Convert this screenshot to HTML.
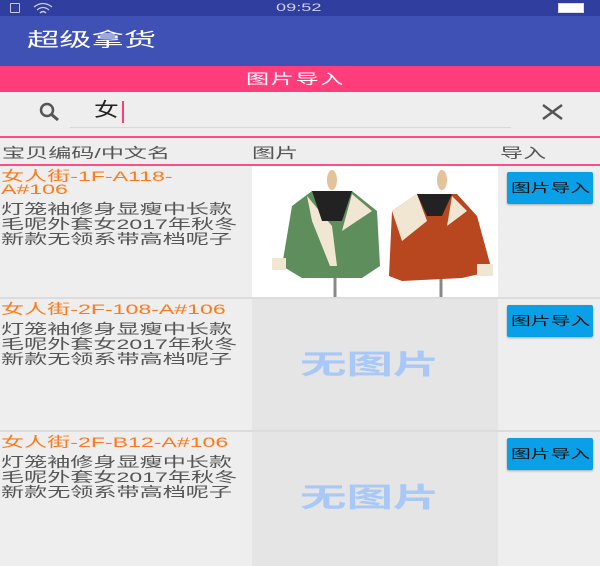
<!DOCTYPE html>
<html><head><meta charset="utf-8"><style>
*{margin:0;padding:0;box-sizing:border-box}
body{width:600px;height:566px;overflow:hidden;background:#eeeeee;font-family:"Liberation Sans","Noto Sans CJK SC",sans-serif;position:relative}
.abs{position:absolute}
.s{display:inline-block;transform:scaleX(1.65);transform-origin:left top;white-space:nowrap}
.code{color:#ff7a1a;font-size:14px;line-height:13px}
.desc{color:#555;font-size:14px;line-height:15px;margin-top:6px}
.btn{position:absolute;left:507px;width:86px;height:32px;background:#0aa0e8;border-radius:2px;box-shadow:0 1px 2px rgba(0,0,0,.3);color:#111;font-size:12px;line-height:32px;padding-left:4px}
.noimg{position:absolute;left:252px;width:246px;background:#e5e5e5;color:#a8c8f8;font-size:27px;font-weight:bold}
.noimg span{position:absolute;left:48px;top:44px;transform:scaleX(1.72)}
.sep{position:absolute;left:0;width:600px;height:2px;background:#dcdcdc}
</style></head><body>
<div class="abs" style="left:0;top:0;width:600px;height:16px;background:#2f3e9f;color:#cfd3ee;font-size:11px;line-height:16px"><span class="s" style="position:absolute;left:276px">09:52</span></div>
<div class="abs" style="left:10px;top:3px;width:10px;height:10px;border:1px solid #ccd;border-radius:1px"></div>
<svg class="abs" style="left:32px;top:2px" width="22" height="12"><path d="M2 5Q11 -2 20 5M5 8Q11 3 17 8M8 11Q11 8 14 11" stroke="#ccd" stroke-width="1.3" fill="none"/></svg>
<div class="abs" style="left:558px;top:3px;width:26px;height:10px;border:1px solid #dde;background:#fff"></div>
<div class="abs" style="left:0;top:16px;width:600px;height:50px;background:#3f51b5;color:#fff;font-size:19px;line-height:50px"><span class="s" style="position:absolute;left:27px;transform:scaleX(1.7)">超级拿货</span></div>
<div class="abs" style="left:0;top:66px;width:600px;height:26px;background:#ff3d7b;color:#fff;font-size:14px;line-height:26px"><span class="s" style="position:absolute;left:246px;letter-spacing:1px">图片导入</span></div>
<svg class="abs" style="left:36px;top:102px" width="32" height="22"><circle cx="11" cy="8" r="6" fill="none" stroke="#555" stroke-width="2.5"/><line x1="15" y1="12" x2="22" y2="18" stroke="#555" stroke-width="3"/></svg>
<div class="abs" style="left:94px;top:98px;font-size:19px;color:#222;line-height:26px"><span class="s" style="transform:scaleX(1.3)">女</span></div>
<div class="abs" style="left:122px;top:101px;width:2px;height:22px;background:#ff3d7b"></div>
<svg class="abs" style="left:540px;top:103px" width="26" height="18"><path d="M3 2L22 16M22 2L3 16" stroke="#555" stroke-width="2.5"/></svg>
<div class="abs" style="left:70px;top:127px;width:441px;height:1px;background:#d8d8d8"></div>
<div class="abs" style="left:0;top:136px;width:600px;height:2px;background:#ff4d85"></div>
<div class="abs" style="left:2px;top:143px;font-size:14px;color:#555"><span class="s">宝贝编码/中文名</span></div>
<div class="abs" style="left:252px;top:143px;font-size:14px;color:#555"><span class="s">图片</span></div>
<div class="abs" style="left:500px;top:143px;font-size:14px;color:#555"><span class="s">导入</span></div>
<div class="abs" style="left:0;top:164px;width:600px;height:2px;background:#ff4d85"></div>

<div class="abs" style="left:1px;top:170px"><div class="s"><div class="code">女人街-1F-A118-<br>A#106</div><div class="desc">灯笼袖修身显瘦中长款<br>毛呢外套女2017年秋冬<br>新款无领系带高档呢子</div></div></div>
<svg class="abs" style="left:252px;top:166px" width="246" height="132">
<rect width="246" height="132" fill="#fff"/>
<line x1="83" y1="110" x2="83" y2="132" stroke="#888" stroke-width="3"/><line x1="189" y1="110" x2="189" y2="132" stroke="#888" stroke-width="3"/>
<ellipse cx="80" cy="14" rx="5" ry="10" fill="#e4c39a"/><ellipse cx="190" cy="14" rx="5" ry="10" fill="#e4c39a"/>
<path d="M30 100 L40 40 L60 25 L100 25 L125 45 L128 100 L110 112 L50 112 Z" fill="#5e8e5c"/>
<path d="M55 30 L80 60 L85 100 L78 100 L60 55 Z M100 28 L120 45 L90 65 Z" fill="#f1e6d2"/>
<path d="M60 25 L100 25 L90 55 L70 55Z" fill="#222"/>
<path d="M137 110 L140 45 L165 28 L205 28 L225 50 L240 105 L210 112 L150 115 Z" fill="#b8461f"/>
<path d="M140 45 L165 28 L175 55 L150 75 Z M200 30 L215 45 L195 60 Z" fill="#f1e6d2"/>
<path d="M165 28 L200 28 L190 50 L175 50Z" fill="#222"/>
<rect x="20" y="92" width="14" height="12" fill="#f1e6d2"/><rect x="225" y="98" width="16" height="12" fill="#f1e6d2"/>
</svg>
<div class="btn" style="top:172px"><span class="s">图片导入</span></div>
<div class="sep" style="top:297px"></div>

<div class="abs" style="left:1px;top:303px"><div class="s"><div class="code">女人街-2F-108-A#106</div><div class="desc">灯笼袖修身显瘦中长款<br>毛呢外套女2017年秋冬<br>新款无领系带高档呢子</div></div></div>
<div class="noimg" style="top:299px;height:131px"><span class="s">无图片</span></div>
<div class="btn" style="top:305px"><span class="s">图片导入</span></div>
<div class="sep" style="top:430px"></div>

<div class="abs" style="left:1px;top:436px"><div class="s"><div class="code">女人街-2F-B12-A#106</div><div class="desc">灯笼袖修身显瘦中长款<br>毛呢外套女2017年秋冬<br>新款无领系带高档呢子</div></div></div>
<div class="noimg" style="top:432px;height:134px"><span class="s">无图片</span></div>
<div class="btn" style="top:438px"><span class="s">图片导入</span></div>
</body></html>
